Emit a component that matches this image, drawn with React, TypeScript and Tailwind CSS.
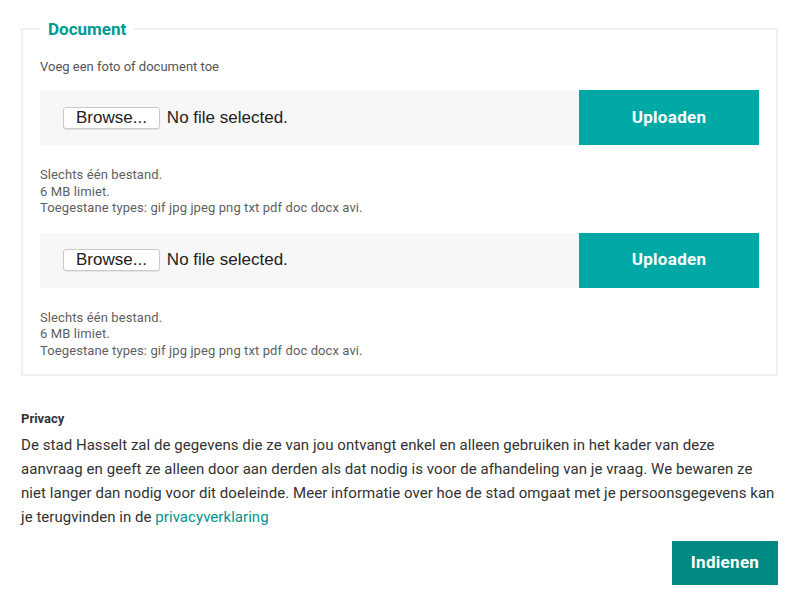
import React from "react";

const FileRow = () => (
  <div className="flex h-[55px] w-full">
    <div className="flex flex-1 items-center bg-[#f7f7f7] pl-[23px]">
      <span className="flex h-[22px] items-center rounded-[3px] border border-[#c9c9c9] bg-white px-[12px] text-[17px] text-[#222] shadow-[0_1px_1px_rgba(0,0,0,0.08)] [font-family:'Liberation_Sans',Arial,sans-serif]">
        Browse...
      </span>
      <span className="ml-[7px] text-[17px] text-[#222] [font-family:'Liberation_Sans',Arial,sans-serif]">
        No file selected.
      </span>
    </div>
    <button className="flex w-[180px] items-center justify-center bg-[#00a9a5] text-[17px] font-bold tracking-[0.3px] text-white">
      Uploaden
    </button>
  </div>
);

const Help = () => (
  <div className="mt-[22px] text-[13px] leading-[16.5px] tracking-[0.1px] text-[#5f5f5f]">
    <div>Slechts één bestand.</div>
    <div>6 MB limiet.</div>
    <div>Toegestane types: gif jpg jpeg png txt pdf doc docx avi.</div>
  </div>
);

export default function App() {
  return (
    <div className="min-h-[610px] w-[805px] bg-white pt-[19px] [font-family:Roboto,'Noto_Sans',sans-serif]">
      <div className="ml-[21px] w-[757px]">
        <fieldset className="w-[757px] border-2 border-[#efefef] px-[17px] pb-[15px] pt-[18px]">
          <legend className="px-2 text-[17px] font-bold leading-[20px] text-[#009a93]">Document</legend>
          <div className="text-[13px] leading-[20px] text-[#555]">Voeg een foto of document toe</div>
          <div className="mt-[13px]">
            <FileRow />
          </div>
          <Help />
          <div className="mt-[16px]">
            <FileRow />
          </div>
          <Help />
        </fieldset>
        <div className="mt-[33px] text-[13px] font-bold leading-[20px] text-[#333]">Privacy</div>
        <p className="mt-[4px] text-[15px] leading-[24px] tracking-[0.05px] text-[#333]">
          De stad Hasselt zal de gegevens die ze van jou ontvangt enkel en alleen gebruiken in het kader van deze
          <br />
          aanvraag en geeft ze alleen door aan derden als dat nodig is voor de afhandeling van je vraag. We bewaren ze
          <br />
          niet langer dan nodig voor dit doeleinde. Meer informatie over hoe de stad omgaat met je persoonsgegevens kan
          <br />
          je terugvinden in de <a className="text-[#00968f]" href="#">privacyverklaring</a>
        </p>
        <div className="mt-[12px] flex justify-end">
          <button className="h-[44px] w-[106px] bg-[#008a83] text-[17px] font-bold tracking-[0.3px] text-white">Indienen</button>
        </div>
      </div>
    </div>
  );
}
